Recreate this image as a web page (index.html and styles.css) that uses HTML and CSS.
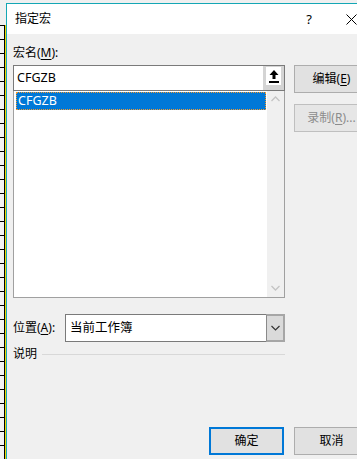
FILE: index.html
```html
<!DOCTYPE html>
<html lang="zh">
<head>
<meta charset="utf-8">
<title>指定宏</title>
<link rel="stylesheet" href="styles.css">
</head>
<body>
<div class="screen">
  <div class="sheet">
    <div class="sheet-top"></div>
    <div class="sheet-grid"></div>
  </div>
  <div class="dialog">
    <div class="titlebar">
      <span class="title">指定宏</span>
      <span class="help">?</span>
      <span class="close"><svg width="11" height="11" viewBox="0 0 11 11"><path d="M0.5 0.5L10.5 10.5M10.5 0.5L0.5 10.5" stroke="#000" stroke-width="1" fill="none"/></svg></span>
    </div>
    <div class="body">
      <div class="main">
        <div class="left">
          <div class="label">宏名(<u>M</u>):</div>
          <div class="namebox">
            <span class="nameval">CFGZB</span>
            <span class="pickbtn"><span class="pickicon"><svg width="14" height="16" viewBox="0 0 14 16"><path d="M7 2L2.5 7H5.5V11H8.5V7H11.5Z" fill="#000"/><rect x="2" y="13" width="10" height="2" fill="#000"/></svg></span></span>
          </div>
          <div class="listbox">
            <div class="items">
              <div class="item sel">CFGZB</div>
            </div>
            <div class="vscroll">
              <svg width="9" height="6" viewBox="0 0 9 6"><path d="M0.5 5L4.5 1L8.5 5" stroke="#c4c4c4" stroke-width="1.3" fill="none"/></svg>
              <svg width="9" height="6" viewBox="0 0 9 6"><path d="M0.5 1L4.5 5L8.5 1" stroke="#c4c4c4" stroke-width="1.3" fill="none"/></svg>
            </div>
          </div>
          <div class="locrow">
            <span class="label">位置(<u>A</u>):</span>
            <div class="select">
              <span class="selval">当前工作簿</span>
              <span class="dd"><svg width="9" height="6" viewBox="0 0 9 6"><path d="M0.5 1L4.5 5L8.5 1" stroke="#333" stroke-width="1.2" fill="none"/></svg></span>
            </div>
          </div>
          <div class="desc">
            <span class="label">说明</span>
            <span class="rule"></span>
          </div>
        </div>
        <div class="side">
          <button class="btn">编辑(<u>E</u>)</button>
          <button class="btn" disabled>录制(<u>R</u>)...</button>
        </div>
      </div>
      <div class="footer">
        <button class="btn primary">确定</button>
        <button class="btn">取消</button>
      </div>
    </div>
  </div>
</div>
</body>
</html>
```

FILE: styles.css
```css
* { box-sizing: border-box; }
html, body {
  margin: 0;
  padding: 0;
  width: 357px;
  height: 459px;
  overflow: hidden;
  background: #f0f0f0;
}
body {
  font-family: "Noto Sans", "Noto Sans CJK SC", sans-serif;
  font-size: 12px;
  color: #000;
}
.screen {
  display: flex;
  width: 380px;
  height: 459px;
}
.sheet {
  width: 6px;
  flex: none;
  display: flex;
  flex-direction: column;
}
.sheet-top {
  height: 25px;
  background: #f0f0f0;
}
.sheet-grid {
  flex: 1;
  background:
    linear-gradient(to right, transparent 0 4px, #000 4px 5px, #f2d600 5px 6px),
    repeating-linear-gradient(to bottom, #000 0 1px, #f3f3f3 1px 14px);
}
.dialog {
  width: 371px;
  flex: none;
  margin-top: 3px;
  border-top: 1px solid #14a7b5;
  border-left: 1px solid #14a7b5;
  display: flex;
  flex-direction: column;
  background: #f0f0f0;
}
.titlebar {
  height: 30px;
  background: #fff;
  display: flex;
  align-items: center;
  padding-left: 8px;
}
.title {
  font-size: 12px;
  line-height: 16px;
}
.help {
  margin-left: auto;
  font-family: "Noto Sans", sans-serif;
  font-size: 13px;
  line-height: 16px;
  margin-right: 34px;
}
.close {
  display: flex;
  margin-right: 20px;
}
.body {
  flex: 1;
  display: flex;
  flex-direction: column;
  padding: 11px 8px 0 6px;
}
.main {
  display: flex;
  gap: 9px;
}
.left {
  width: 272px;
  display: flex;
  flex-direction: column;
}
.label {
  line-height: 16px;
  white-space: nowrap;
}
u { text-decoration-thickness: 1px; text-underline-offset: 2px; }
.namebox {
  margin-top: 4px;
  height: 26px;
  border: 1px solid #7a7a7a;
  background: #fff;
  display: flex;
  align-items: center;
}
.nameval {
  flex: 1;
  padding-left: 3px;
  font-size: 12.5px;
  line-height: 16px;
}
.pickbtn {
  width: 21px;
  align-self: stretch;
  background: #d4d4d4;
  display: flex;
  justify-content: center;
  padding-top: 1px;
}
.pickicon {
  width: 15px;
  height: 18px;
  background: #fff;
  display: flex;
  align-items: center;
  justify-content: center;
}
.listbox {
  height: 207px;
  border: 1px solid #a0a0a0;
  border-top: none;
  background: #fff;
  display: flex;
}
.items {
  flex: 1;
  padding: 1px 1px 0 2px;
}
.item {
  height: 18px;
  line-height: 17px;
  padding-left: 2px;
  font-size: 12.5px;
}
.item.sel {
  background: #0078d7;
  color: #fff;
  outline: 1px dotted #f59a2c;
  outline-offset: -1px;
}
.vscroll {
  width: 17px;
  background: #f0f0f0;
  display: flex;
  flex-direction: column;
  justify-content: space-between;
  align-items: center;
  padding: 5px 0 6px;
}
.locrow {
  margin-top: 16px;
  display: flex;
  align-items: center;
  gap: 10px;
}
.select {
  flex: 1;
  height: 28px;
  border: 1px solid #7a7a7a;
  background: #fff;
  display: flex;
  align-items: center;
}
.selval {
  flex: 1;
  padding-left: 4px;
  line-height: 16px;
  font-size: 12.5px;
}
.dd {
  width: 19px;
  align-self: stretch;
  margin: -1px -1px -1px 0;
  background: #dadada;
  border: 2px solid #a6a6a6;
  border-left: 1px solid #8a8a8a;
  display: flex;
  align-items: center;
  justify-content: center;
}
.desc {
  margin-top: 4px;
  display: flex;
  align-items: center;
  gap: 5px;
}
.rule {
  flex: 1;
  height: 1px;
  background: #d8d8d8;
}
.side {
  width: 75px;
  display: flex;
  flex-direction: column;
  gap: 11px;
  padding-top: 20px;
}
.btn {
  width: 75px;
  height: 28px;
  font: inherit;
  font-size: 12px;
  color: #000;
  background: #e1e1e1;
  border: 1px solid #adadad;
  padding: 0;
  line-height: 16px;
}
.btn:disabled {
  color: #8c8c8c;
  background: #e6e6e6;
  border-color: #bfbfbf;
}
.footer {
  margin-top: auto;
  margin-bottom: 4px;
  display: flex;
  justify-content: flex-end;
  gap: 10px;
}
.btn.primary {
  border: 2px solid #0078d7;
}
```
